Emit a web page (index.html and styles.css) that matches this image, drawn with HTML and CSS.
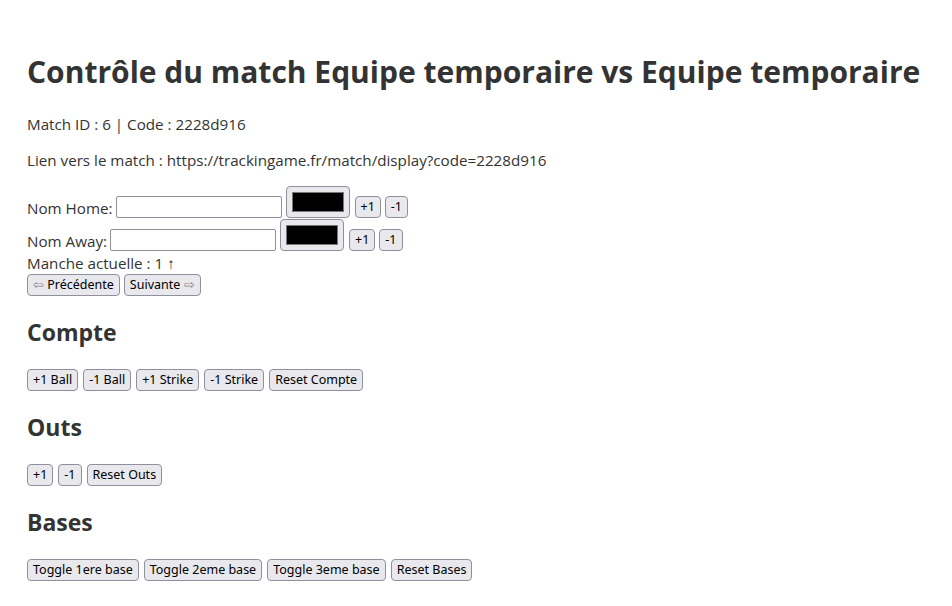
FILE: index.html
```html
<!doctype html>
<html lang="fr">
<head>
    <meta charset="UTF-8" />
    <title>Contrôle du match</title>
    <link rel="stylesheet" href="styles.css">
</head>
<body>

<h1>Contrôle du match Equipe temporaire vs Equipe temporaire</h1>
<p>Match ID : 6 | Code : 2228d916</p>
<p>Lien vers le match : https://trackingame.fr/match/display?code=2228d916</p>

<div class="teams">
    <div class="team-row">
        <label>Nom Home:</label>
        <input type="text" class="team-name">
        <input type="color" class="team-color" value="#000000">
        <button>+1</button>
        <button>-1</button>
    </div>
    <div class="team-row">
        <label>Nom Away:</label>
        <input type="text" class="team-name">
        <input type="color" class="team-color" value="#000000">
        <button>+1</button>
        <button>-1</button>
    </div>
    <div class="inning">Manche actuelle : 1 ↑</div>
    <div class="inning-nav">
        <button><span class="arrow">⇦</span> Précédente</button>
        <button>Suivante <span class="arrow">⇨</span></button>
    </div>
</div>

<h2>Compte</h2>
<div class="btn-row">
    <button>+1 Ball</button>
    <button>-1 Ball</button>
    <button>+1 Strike</button>
    <button>-1 Strike</button>
    <button>Reset Compte</button>
</div>

<h2>Outs</h2>
<div class="btn-row">
    <button>+1</button>
    <button>-1</button>
    <button>Reset Outs</button>
</div>

<h2>Bases</h2>
<div class="btn-row">
    <button>Toggle 1ere base</button>
    <button>Toggle 2eme base</button>
    <button>Toggle 3eme base</button>
    <button>Reset Bases</button>
</div>

</body>
</html>
```

FILE: styles.css
```css
body {
    margin: 0;
    padding: 31px 27px;
    font-family: 'Open Sans', sans-serif;
    font-size: 15.2px;
    color: #333333;
    background: #ffffff;
}
h1 {
    font-size: 30px;
    margin: 20px 0 22px 0;
}
h2 {
    font-size: 23px;
    margin: 20px 0 21px 0;
}
p {
    margin: 16px 0;
}
button {
    font-family: 'Noto Sans', sans-serif;
    font-size: 12.5px;
    line-height: 16px;
    color: #000000;
    background: #e9e9ed;
    border: 1px solid #8f8f9d;
    border-radius: 4px;
    padding: 2px 5px;
    margin: 0;
}
.arrow {
    color: #8a8a8a;
}
.team-row {
    display: flex;
    align-items: flex-end;
    gap: 4px;
}
.team-row + .team-row {
    margin-top: 1px;
}
.team-row label {
    margin-right: -1px;
}
.team-name {
    width: 160px;
    height: 18px;
    border: 1px solid #8f8f9d;
    border-radius: 2px;
    padding: 1px 2px;
    margin: 0;
}
.team-color {
    box-sizing: border-box;
    width: 64px;
    height: 32px;
    padding: 5px;
    border: 1px solid #8f8f9d;
    border-radius: 4px;
    background: #e9e9ed;
    margin: 0 1px 0 0;
}
.team-color::-webkit-color-swatch-wrapper {
    padding: 0;
}
.team-color::-webkit-color-swatch {
    border: 1px solid #777777;
    border-radius: 0;
}
.inning {
    margin-top: 2px;
}
.inning-nav {
    display: flex;
    gap: 4px;
    margin-top: 1px;
}
.btn-row {
    display: flex;
    gap: 5px;
}
```
